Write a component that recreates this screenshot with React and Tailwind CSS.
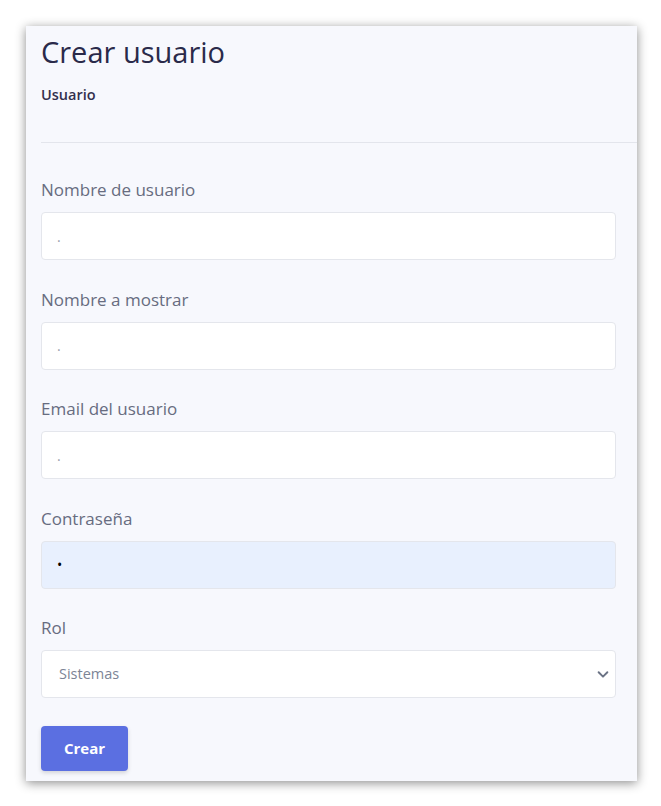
import React from 'react';

const fields = [
  { label: 'Nombre de usuario', type: 'text' },
  { label: 'Nombre a mostrar', type: 'text' },
  { label: 'Email del usuario', type: 'email' },
];

const Field = ({ label, children }) => (
  <div className="flex flex-col">
    <label className="text-[17px] leading-[24px] text-[#676c80] mb-[10px]">{label}</label>
    {children}
  </div>
);

export default function App() {
  return (
    <div className="min-h-screen bg-white pt-[26px] pl-[26px]" style={{ fontFamily: '"Open Sans", "Noto Sans", sans-serif' }}>
      <div className="w-[611px] h-[755px] bg-[#f7f8fd] shadow-[0_2px_10px_rgba(0,0,0,0.45)] pl-[15px]">
        <h1 className="text-[29px] font-medium leading-[40px] text-[#2a2a4a] pt-[6px]">Crear usuario</h1>
        <p className="text-[14.5px] font-semibold leading-[20px] text-[#33304d] mt-[13px]">Usuario</p>
        <hr className="mt-[37px] border-t border-[#e3e5ec]" />
        <div className="pr-[21px] pt-[35px] flex flex-col gap-[27.5px]">
          {fields.map((f) => (
            <Field key={f.label} label={f.label}>
              <input
                type={f.type}
                placeholder="."
                className="h-[48px] w-full rounded-[4px] border border-[#e4e6ec] bg-white px-[15px] text-[14px] text-[#333] placeholder:text-[#9aa0ad] outline-none"
              />
            </Field>
          ))}
          <Field label="Contraseña">
            <input
              type="password"
              defaultValue="a"
              className="h-[48px] w-full rounded-[4px] border border-[#e4e6ec] bg-[#e8f0fe] px-[15px] text-[14px] text-black outline-none"
            />
          </Field>
          <Field label="Rol">
            <div className="relative">
              <select className="h-[48px] w-full appearance-none rounded-[4px] border border-[#e4e6ec] bg-white px-[17px] text-[14.5px] text-[#7c8496] outline-none">
                <option>Sistemas</option>
              </select>
              <svg className="pointer-events-none absolute right-[6px] top-[17px]" width="14" height="14" viewBox="0 0 16 16" fill="none">
                <path d="M3 6l5 5 5-5" stroke="#6b7385" strokeWidth="2.2" strokeLinecap="round" strokeLinejoin="round" />
              </svg>
            </div>
          </Field>
          <div>
            <button className="h-[45px] w-[87px] rounded-[4px] bg-[#5b6fe1] text-[15px] font-bold text-white shadow-[0_2px_4px_rgba(0,0,0,0.15)]">
              Crear
            </button>
          </div>
        </div>
      </div>
    </div>
  );
}
